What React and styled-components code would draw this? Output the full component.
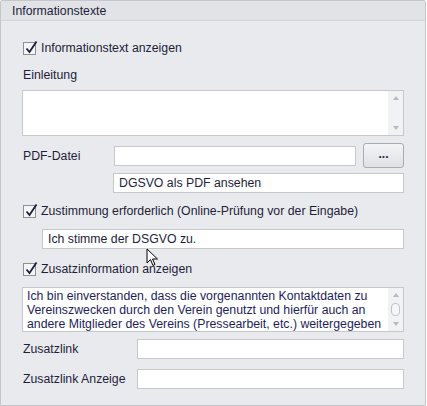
import React from "react";
import styled, { createGlobalStyle } from "styled-components";

const Global = createGlobalStyle`
  html, body {
    margin: 0;
    padding: 0;
    background: #ffffff;
  }
  body {
    font-family: "Liberation Sans", "DejaVu Sans", sans-serif;
    font-size: 12.3px;
    color: #1e1e3a;
  }
`;

const Panel = styled.div`
  position: relative;
  box-sizing: border-box;
  width: 426px;
  height: 406px;
  border: 1px solid #c4c6cb;
  border-radius: 2px 2px 0 0;
  background: #e9eaee;
  display: flex;
  flex-direction: column;
`;

const Header = styled.div`
  height: 19px;
  border-bottom: 1px solid #d3d5d9;
  background: #e1e3e7;
  padding-left: 11px;
  display: flex;
  align-items: center;
  color: #1e1e3a;
`;

const Body = styled.div`
  display: flex;
  flex-direction: column;
  padding: 0 21px 0 21px;
`;

const Row = styled.div`
  display: flex;
  align-items: center;
  height: ${(p) => p.$h || 16}px;
  margin-top: ${(p) => p.$mt || 0}px;
  padding-left: ${(p) => p.$indent || 0}px;
`;

const CheckBox = styled.span`
  box-sizing: border-box;
  width: 13px;
  height: 13px;
  border: 1px solid #8d8f94;
  background: #f4f5f7;
  margin-right: 5px;
  margin-left: 1px;
  position: relative;
  display: inline-block;
  flex: none;
  svg {
    position: absolute;
    left: 0;
    top: -3px;
  }
`;

const Label = styled.span`
  width: ${(p) => (p.$w ? p.$w + "px" : "auto")};
  flex: none;
  padding-left: ${(p) => p.$pl ?? 1}px;
  white-space: nowrap;
`;

const Input = styled.div`
  box-sizing: border-box;
  height: ${(p) => p.$h || 20}px;
  flex: 1;
  background: #ffffff;
  border: 1px solid #c6c8cc;
  padding: 0 5px;
  display: flex;
  align-items: center;
  white-space: nowrap;
  overflow: hidden;
  color: #1e1e3a;
`;

const Memo = styled.div`
  box-sizing: border-box;
  height: ${(p) => p.$h}px;
  margin-top: ${(p) => p.$mt || 0}px;
  background: #ffffff;
  border: 1px solid #c6c8cc;
  display: flex;
`;

const MemoText = styled.div`
  flex: 1;
  padding: 1px 4px 0;
  line-height: 14px;
  color: #1e1e5a;
  overflow: hidden;
  white-space: nowrap;
`;

const ScrollBar = styled.div`
  width: 15px;
  background: #f1f2f4;
  display: flex;
  flex-direction: column;
  align-items: center;
  justify-content: space-between;
  padding: 5px 0;
`;

const Arrow = styled.span`
  width: 0;
  height: 0;
  border-left: 3px solid transparent;
  border-right: 3px solid transparent;
  ${(p) =>
    p.$up
      ? "border-bottom: 4px solid #b8babf;"
      : "border-top: 4px solid #b8babf;"}
`;

const Thumb = styled.span`
  width: 7px;
  height: 11px;
  border: 1px solid #c2c4c8;
  border-radius: 4px;
  background: #f6f6f8;
`;

const Button = styled.div`
  box-sizing: border-box;
  width: 41px;
  height: 25px;
  margin-left: 7px;
  border: 1px solid #a9abb0;
  border-radius: 3px;
  background: linear-gradient(#f3f4f6, #dfe1e5);
  display: flex;
  align-items: center;
  justify-content: center;
  font-weight: bold;
  padding-bottom: 3px;
  color: #2a2a44;
`;

const Cursor = styled.svg`
  position: absolute;
  left: 145px;
  top: 247px;
`;

const Check = () => (
  <CheckBox>
    <svg width="14" height="14" viewBox="0 0 14 14">
      <path d="M2.5 8.5 L5.5 12 L12.5 1.5" fill="none" stroke="#1d1d3a" strokeWidth="1.8" />
    </svg>
  </CheckBox>
);

export default function App() {
  return (
    <>
      <Global />
      <Panel>
        <Header>Informationstexte</Header>
        <Body>
          <Row $mt={19}>
            <Check />
            <Label $pl={0}>Informationstext anzeigen</Label>
          </Row>
          <Row $mt={11}>
            <Label>Einleitung</Label>
          </Row>
          <Memo $h={46} $mt={7}>
            <MemoText />
            <ScrollBar>
              <Arrow $up />
              <Arrow />
            </ScrollBar>
          </Memo>
          <Row $h={25} $mt={7}>
            <Label $w={91}>PDF-Datei</Label>
            <Input>&nbsp;</Input>
            <Button>...</Button>
          </Row>
          <Row $h={20} $mt={5} $indent={91}>
            <Input>DGSVO als PDF ansehen</Input>
          </Row>
          <Row $mt={10}>
            <Check />
            <Label $pl={0}>Zustimmung erforderlich (Online-Prüfung vor der Eingabe)</Label>
          </Row>
          <Row $h={20} $mt={10} $indent={20}>
            <Input>Ich stimme der DSGVO zu.</Input>
          </Row>
          <Row $mt={12}>
            <Check />
            <Label $pl={0}>Zusatzinformation anzeigen</Label>
          </Row>
          <Memo $h={45} $mt={10}>
            <MemoText>
              Ich bin einverstanden, dass die vorgenannten Kontaktdaten zu
              <br />
              Vereinszwecken durch den Verein genutzt und hierfür auch an
              <br />
              andere Mitglieder des Vereins (Pressearbeit, etc.) weitergegeben
            </MemoText>
            <ScrollBar>
              <Arrow $up />
              <Thumb />
              <Arrow />
            </ScrollBar>
          </Memo>
          <Row $h={20} $mt={7}>
            <Label $w={114}>Zusatzlink</Label>
            <Input>&nbsp;</Input>
          </Row>
          <Row $h={20} $mt={10}>
            <Label $w={114}>Zusatzlink Anzeige</Label>
            <Input>&nbsp;</Input>
          </Row>
        </Body>
        <Cursor width="14" height="20" viewBox="0 0 14 20">
          <path d="M1 1 L1 15 L4.5 11.5 L7 17.5 L9 16.5 L6.5 11 L11.5 11 Z" fill="#ffffff" stroke="#000000" strokeWidth="1" strokeLinejoin="miter" />
        </Cursor>
      </Panel>
    </>
  );
}
